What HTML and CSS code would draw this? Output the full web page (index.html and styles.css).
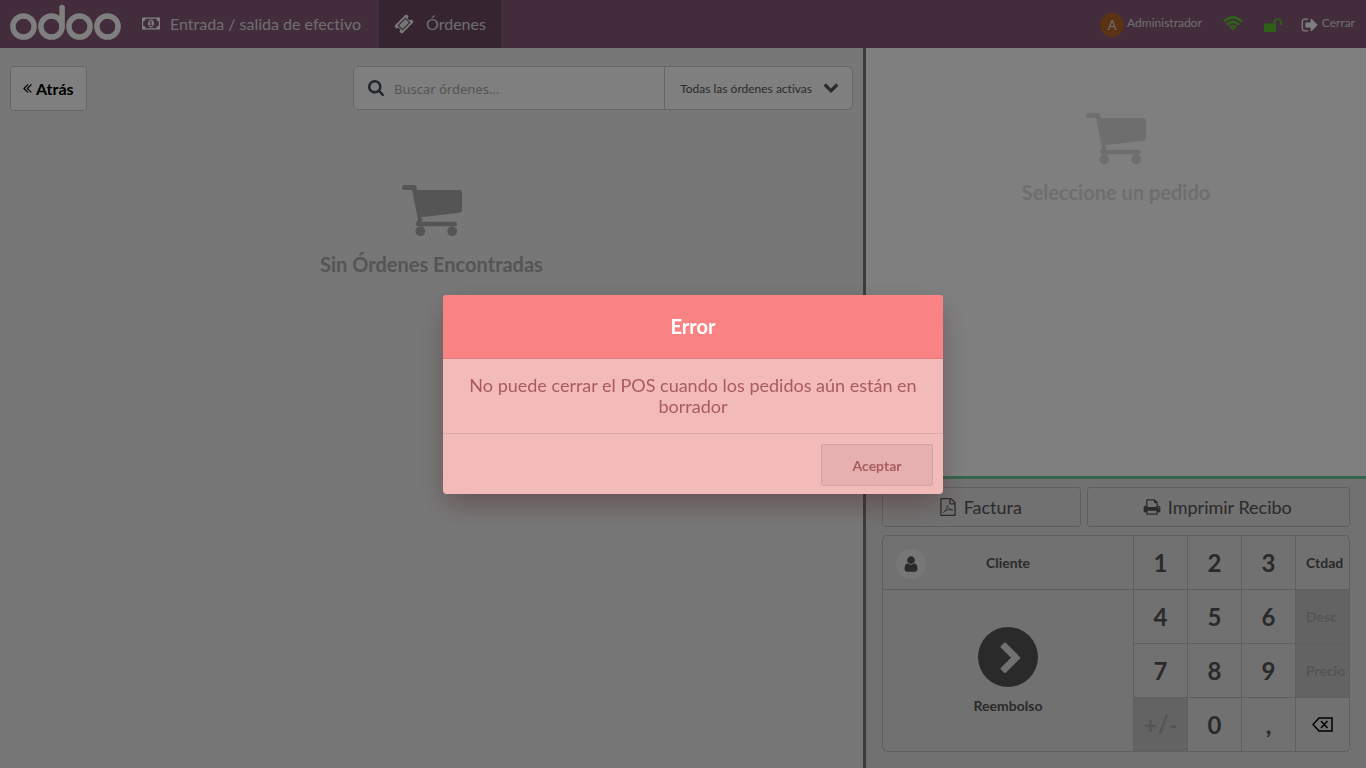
FILE: index.html
```html
<!DOCTYPE html>
<html lang="es">
<head>
<meta charset="utf-8">
<meta name="viewport" content="width=device-width, initial-scale=1">
<title>Odoo POS</title>
<link rel="stylesheet" href="styles.css">
</head>
<body>
<svg class="sprite" aria-hidden="true">
  <symbol id="cart" viewBox="0 0 60 52">
    <path d="M2.500 0H12.500Q14 0 14.200 1.500L15 5H57.500Q60 5 60 7.500V25.500Q60 27.500 58 27.800L18.500 32.300L20.500 34.500L19.500 36.700H53Q55 36.700 55 39T53 41.300H16Q13.500 41 14 38L16 34.500L10 5H2.500Q0 5 0 2.500T2.500 0Z"/>
    <circle cx="18.300" cy="46.200" r="4.900"/><circle cx="50.200" cy="46.200" r="4.900"/>
  </symbol>
</svg>
<div class="pos">
  <header class="topbar">
    <a class="logo" href="#" aria-label="odoo">
      <svg width="112" height="37" viewBox="0 0 112 37" fill="none" stroke="currentColor" stroke-width="5.500">
        <circle cx="13.500" cy="22.500" r="10.600"/><circle cx="41.500" cy="22.500" r="10.600"/><circle cx="69.500" cy="22.500" r="10.600"/><circle cx="97.500" cy="22.500" r="10.600"/>
        <path d="M52.100 3.500V22.500" stroke-linecap="round"/>
      </svg>
    </a>
    <button class="nav cash" type="button">
      <svg width="18" height="17" viewBox="0 0 1920 1792"><path d="M768 1152h384v-96h-128v-448h-114l-148 137 77 80q42-37 55-57h2v288h-128v96zm512-256q0 70-21 142t-59.500 134-101.500 101-138 39-138-39-101.500-101-59.500-134-21-142 21-142 59.500-134 101.500-101 138-39 138 39 101.500 101 59.500 134 21 142zm512 256v-512q-106 0-181-75t-75-181h-1152q0 106-75 181t-181 75v512q106 0 181 75t75 181h1152q0-106 75-181t181-75zm128-832v1152q0 26-19 45t-45 19h-1792q-26 0-45-19t-19-45v-1152q0-26 19-45t45-19h1792q26 0 45 19t19 45z"/></svg>
      <span>Entrada / salida de efectivo</span>
    </button>
    <button class="nav orders" type="button">
      <svg width="20" height="20" viewBox="0 0 1792 1792"><path d="M1024 452l316 316-572 572-316-316zm-211 979l618-618q19-19 19-45t-19-45l-362-362q-18-18-45-18t-45 18l-618 618q-19 19-19 45t19 45l362 362q18 18 45 18t45-18zm889-637l-907 908q-37 37-90.500 37t-90.500-37l-126-125q56-56 56-136t-56-136-136-56-136 56l-125-126q-37-37-37-90.500t37-90.500l907-906q37-37 90.500-37t90.500 37l125 125q-56 56-56 136t56 136 136 56 136-56l126 125q37 37 37 90.500t-37 90.500z"/></svg>
      <span>Órdenes</span>
    </button>
    <div class="status">
      <button class="user" type="button"><span class="avatar">A</span><span>Administrador</span></button>
      <svg class="green" width="20" height="15" viewBox="0 0 20 15" fill="none" stroke="currentColor" stroke-width="2.600" role="img" aria-label="Conectado">
        <path d="M1 5.600Q10-2.800 19 5.600M4 8.800Q10 3 16 8.800M6.800 11.600Q10 8.400 13.200 11.600"/><path d="M8 12.600Q10 11 12 12.600L10 14.800Z" fill="currentColor" stroke="none"/>
      </svg>
      <svg class="green lock" width="18" height="15" viewBox="0 0 18 15" role="img" aria-label="Desbloqueado">
        <path d="M1 6.500H9.500V5A4.200 4.500 0 0 1 17.800 5V7.500Q17.800 8 17 8T16 7.500V5A2.400 2.700 0 0 0 11.300 5V6.500Q12 6.500 12 7.500V14Q12 15 11 15H1Q0 15 0 14V7.500Q0 6.500 1 6.500Z"/>
      </svg>
      <button class="close" type="button">
        <svg width="18" height="18" viewBox="0 0 1792 1792"><path d="M704 1440q0 4 1 20t.5 26.500-3 23.500-10 19.500-20.500 6.500h-320q-119 0-203.500-84.500t-84.500-203.500v-704q0-119 84.500-203.500t203.500-84.500h320q13 0 22.500 9.500t9.500 22.500q0 4 1 20t.5 26.500-3 23.500-10 19.500-20.500 6.500h-320q-66 0-113 47t-47 113v704q0 66 47 113t113 47h312l11.500 1 11.500 3 8 5.500 7 9 2 13.500zm928-544q0 26-19 45l-544 544q-19 19-45 19t-45-19-19-45v-288h-448q-26 0-45-19t-19-45v-384q0-26 19-45t45-19h448v-288q0-26 19-45t45-19 45 19l544 544q19 19 19 45z"/></svg>
        <span>Cerrar</span>
      </button>
    </div>
  </header>
  <main class="screen">
    <section class="left">
      <div class="controls">
        <button class="back" type="button">
          <svg width="9" height="16" viewBox="400 0 1024 1820"><path d="M1011 1376q0 13-10 23l-50 50q-10 10-23 10t-23-10l-466-466q-10-10-10-23t10-23l466-466q10-10 23-10t23 10l50 50q10 10 10 23t-10 23l-393 393 393 393q10 10 10 23zm384 0q0 13-10 23l-50 50q-10 10-23 10t-23-10l-466-466q-10-10-10-23t10-23l466-466q10-10 23-10t23 10l50 50q10 10 10 23t-10 23l-393 393 393 393q10 10 10 23z"/></svg>
          <span>Atrás</span>
        </button>
        <div class="search">
          <label class="field">
            <svg width="16" height="16" viewBox="64 128 1664 1664"><path d="M1216 832q0-185-131.500-316.500t-316.500-131.500-316.500 131.500-131.500 316.500 131.500 316.500 316.500 131.500 316.500-131.500 131.500-316.500zm512 832q0 52-38 90t-90 38q-54 0-90-38l-343-342q-179 124-399 124-143 0-273.500-55.500t-225-150-150-225-55.500-273.500 55.500-273.500 150-225 225-150 273.500-55.500 273.500 55.500 225 150 150 225 55.500 273.500q0 220-124 399l343 343q37 37 37 90z"/></svg>
            <input type="text" placeholder="Buscar órdenes..." aria-label="Buscar órdenes">
          </label>
          <button class="filter" type="button">
            <span>Todas las órdenes activas</span>
            <svg width="16" height="16" viewBox="0 128 1792 1792"><path d="M1683 808l-742 741q-19 19-45 19t-45-19l-742-741q-19-19-19-45.500t19-45.500l166-165q19-19 45-19t45 19l531 531 531-531q19-19 45-19t45 19l166 165q19 19 19 45.500t-19 45.500z"/></svg>
          </button>
        </div>
      </div>
      <div class="empty">
        <svg width="60" height="52"><use href="#cart"/></svg>
        <h1>Sin Órdenes Encontradas</h1>
      </div>
    </section>
    <section class="right">
      <div class="empty order">
        <svg width="60" height="52"><use href="#cart"/></svg>
        <h2>Seleccione un pedido</h2>
      </div>
      <div class="pads">
        <div class="actions">
          <button class="invoice" type="button">
            <svg width="18" height="18" viewBox="0 0 1792 1792"><path d="M1596 380q28 28 48 76t20 88v1152q0 40-28 68t-68 28h-1344q-40 0-68-28t-28-68v-1600q0-40 28-68t68-28h896q40 0 88 20t76 48zm-444-244v376h376q-10-29-22-41l-313-313q-12-12-41-22zm384 1528v-1024h-416q-40 0-68-28t-28-68v-416h-768v1536h1280z"/><path d="M420 1480Q760 1220 850 760M840 740Q880 1110 1370 1210M520 1300Q900 1110 1370 1160" fill="none" stroke="currentColor" stroke-width="80"/></svg>
            <span>Factura</span>
          </button>
          <button class="print" type="button">
            <svg width="18" height="18" viewBox="0 0 1792 1792"><path d="M448 1536h896v-256h-896v256zm0-640h896v-384h-160q-40 0-68-28t-28-68v-160h-640v640zm1152 64q0-26-19-45t-45-19-45 19-19 45 19 45 45 19 45-19 19-45zm128 0v416q0 13-9.500 22.500t-22.500 9.500h-224v160q0 40-28 68t-68 28h-960q-40 0-68-28t-28-68v-160h-224q-13 0-22.500-9.500t-9.500-22.500v-416q0-79 56.500-135.500t135.500-56.500h64v-544q0-40 28-68t68-28h672q40 0 88 20t76 48l152 152q28 28 48 76t20 88v256h64q79 0 135.500 56.500t56.500 135.500z"/></svg>
            <span>Imprimir Recibo</span>
          </button>
        </div>
        <div class="keypad">
          <button class="customer" type="button">
            <span class="person"><svg width="18" height="18" viewBox="0 0 1792 1792"><path d="M1536 1399q0 109-62.500 187t-150.500 78h-854q-88 0-150.500-78t-62.500-187q0-85 8.500-160.500t31.500-152 58.500-131 94-89 134.500-34.500q131 128 313 128t313-128q76 0 134.500 34.500t94 89 58.500 131 31.500 152 8.500 160.500zm-256-887q0 159-112.500 271.500t-271.500 112.500-271.500-112.500-112.500-271.500 112.500-271.500 271.500-112.500 271.500 112.500 112.500 271.500z"/></svg></span>
            <span>Cliente</span>
          </button>
          <button type="button">1</button><button type="button">2</button><button type="button">3</button><button class="mode" type="button">Ctdad</button>
          <button class="refund" type="button">
            <span class="disc"><svg width="34" height="34" viewBox="0 0 1792 1792"><path d="M1363 877l-742 742q-19 19-45 19t-45-19l-166-166q-19-19-19-45t19-45l531-531-531-531q-19-19-19-45t19-45l166-166q19-19 45-19t45 19l742 742q19 19 19 45t-19 45z"/></svg></span>
            <span>Reembolso</span>
          </button>
          <button type="button">4</button><button type="button">5</button><button type="button">6</button><button class="mode" type="button" disabled>Desc</button>
          <button type="button">7</button><button type="button">8</button><button type="button">9</button><button class="mode" type="button" disabled>Precio</button>
          <button type="button" disabled>+/-</button><button type="button">0</button><button type="button">,</button>
          <button class="erase" type="button" aria-label="Borrar"><svg width="21" height="16" viewBox="0 0 21 16" fill="none" stroke="currentColor" stroke-width="1.500"><path d="M7 1H20V14H7L1 7.500ZM9 4L15.500 11M15.500 4L9 11"/></svg></button>
        </div>
      </div>
    </section>
  </main>
</div>
<div class="overlay">
  <div class="popup" role="alertdialog" aria-modal="true" aria-labelledby="popup-title" aria-describedby="popup-text">
    <h2 id="popup-title">Error</h2>
    <p id="popup-text">No puede cerrar el POS cuando los pedidos aún están en borrador</p>
    <footer><button type="button">Aceptar</button></footer>
  </div>
</div>
</body>
</html>
```
FILE: styles.css
```css
* { box-sizing: border-box; }
body { margin: 0; font-family: Lato, sans-serif; font-size: 14px; font-variant-ligatures: none; color: #555; }
button { font: inherit; font-variant-ligatures: none; color: inherit; background: none; border: 0; padding: 0; margin: 0; }
h1, h2, p { margin: 0; }
svg { display: block; flex: none; fill: currentColor; }
svg[fill="none"] { fill: none; }
.sprite { position: absolute; width: 0; height: 0; }

.pos { display: flex; flex-direction: column; min-height: 100vh; }

.topbar { display: flex; align-items: stretch; height: 48px; background: #875a7b; color: #fff; }
.logo { display: flex; align-items: center; padding: 0 10px 3px; color: #fff; }
.nav { display: flex; align-items: center; padding-bottom: 1px; font-size: 16px; color: #ddd; }
.nav svg { color: #fff; }
.cash { gap: 10px; padding-left: 10px; padding-right: 18px; }
.orders { gap: 12px; padding-left: 15px; padding-right: 15px; background: #6c4862; }
.orders svg { color: #eee; }
.status { display: flex; align-items: center; margin-left: auto; padding: 0 11px 3px 0; font-size: 12px; color: #ddd; }
.user { display: flex; align-items: center; gap: 3px; margin-right: 21px; }
.avatar { display: grid; place-items: center; width: 24px; height: 24px; margin-top: 4px; border-radius: 50%; background: #b56429; font-size: 13px; }
.green { color: #5ec12e; margin-top: 1px; }
.lock { margin: 3px 19px 0 21px; }
.close { display: flex; align-items: center; gap: 3px; }
.close svg { color: #fff; margin-top: 4px; }

.screen { display: flex; flex: 1; }
.left { flex: 1; background: #eee; border-right: 3px solid #777; }
.right { display: flex; flex-direction: column; width: 500px; background: #fff; }

.controls { display: flex; align-items: flex-start; justify-content: space-between; padding: 18px 10px 0; }
.back { display: flex; align-items: center; gap: 4px; height: 45px; padding: 0 12px 1px; background: #fff; border: 1px solid #ccc; border-radius: 3px; color: #000; font-size: 16px; font-weight: 700; }
.search { display: flex; width: 500px; height: 44px; background: #fff; border: 1px solid #ccc; border-radius: 5px; }
.field { display: flex; flex: 1; align-items: center; gap: 10px; padding-left: 14px; color: #444b5a; }
.field input { flex: 1; min-width: 0; border: 0; outline: 0; background: none; font: 13px "Noto Sans", sans-serif; padding: 2px 0 0; color: #555; }
.field input::placeholder { color: #aaa; opacity: 1; }
.filter { display: flex; align-items: center; gap: 11px; padding: 0 13px 0 15px; border-left: 1px solid #ccc; font-size: 12px; }

.empty { display: flex; flex-direction: column; align-items: center; gap: 15px; padding-top: 74px; color: #aaa; }
.empty h1, .empty h2 { font-size: 20px; line-height: 24px; font-weight: 700; }
.order { flex: 1; padding-top: 65px; color: #ddd; }

.pads { padding: 8px 16px 16px; background: #e2e2e2; border-top: 3px solid #6ec89b; }
.actions { display: flex; gap: 6px; margin-bottom: 8px; font-size: 18px; }
.actions button { display: flex; align-items: center; justify-content: center; gap: 7px; height: 40px; padding-right: 2px; border: 1px solid #bfbfbf; border-radius: 3px; }
.invoice { flex: 3; }
.print { flex: 4; }
.keypad { display: grid; grid-template-columns: 1fr repeat(4, 54px); grid-auto-rows: 54px; border: solid #bfbfbf; border-width: 1px 0 0 1px; border-radius: 5px; overflow: hidden; }
.keypad button { display: flex; align-items: center; justify-content: center; border: solid #bfbfbf; border-width: 0 1px 1px 0; font-size: 24px; font-weight: 700; }
.keypad .mode { justify-content: flex-start; padding-left: 10px; }
.keypad .mode, .keypad .customer, .keypad .refund { font-size: 14px; }
.keypad button:disabled { background: #c7c7c7; color: #aaa; }
.keypad button:nth-child(5) { border-top-right-radius: 5px; }
.keypad .erase { color: #000; border-bottom-right-radius: 5px; }
.keypad .customer { display: grid; grid-template-columns: 30px 1fr 30px; padding: 0 13px; }
.person { display: grid; place-items: center; width: 30px; height: 30px; margin-top: 2px; border-radius: 50%; background: #eee; }
.keypad .refund { grid-row: 2 / span 3; flex-direction: column; gap: 10px; padding-bottom: 1px; border-bottom-left-radius: 5px; }
.disc { display: grid; place-items: center; width: 60px; height: 60px; border-radius: 50%; background: #555; color: #e2e2e2; }
.disc svg { margin: 4px 0 0 6px; }

.overlay { position: fixed; inset: 0; display: flex; align-items: center; justify-content: center; padding: 21px 0 0 20px; background: rgba(0, 0, 0, 0.5); }
.popup { width: 500px; max-width: 100%; background: #f3baba; border-radius: 4px; box-shadow: 0 12px 26px -4px rgba(70, 20, 20, 0.4); color: #a95c5c; text-align: center; overflow: hidden; }
.popup h2 { padding: 19px 0 20px; background: #f98383; border-bottom: 1px solid #dc7c7c; color: #fff; font-size: 20px; line-height: 24px; }
.popup p { padding: 16px; font-size: 18px; line-height: 21px; }
.popup footer { display: flex; justify-content: flex-end; padding: 10px 10px 8px; border-top: 1px solid #dcaaaa; }
.popup footer button { width: 112px; height: 42px; border: 1px solid #d4a2a2; border-radius: 2px; background: #e7b0b0; font-weight: 700; }
```
